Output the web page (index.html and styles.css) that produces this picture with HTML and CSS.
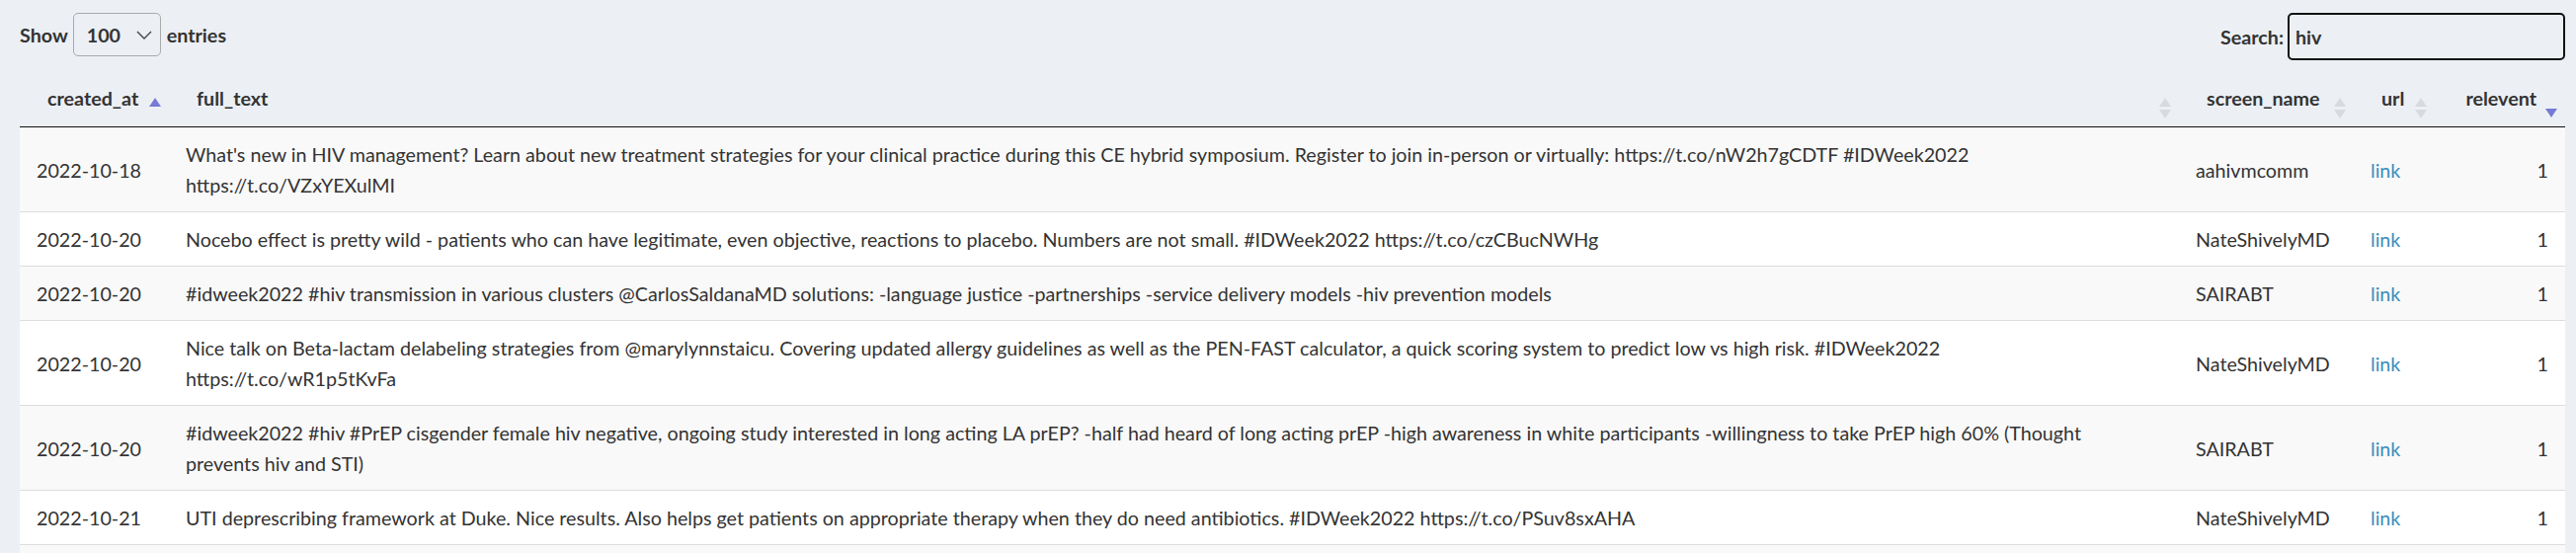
FILE: index.html
```html
<!DOCTYPE html>
<html lang="en">
<head>
  <meta charset="UTF-8" />
  <meta name="viewport" content="width=device-width, initial-scale=1.0"/>
  <title>IDWeek tweets</title>
  <link rel="stylesheet" href="styles.css">
</head>
<body>
  <div class="wrapper">
    <div class="toolbar">
      <label class="length">
        Show
        <span class="select-wrap">
          <select>
            <option>10</option>
            <option>25</option>
            <option>50</option>
            <option selected>100</option>
          </select>
          <svg class="chevron" width="16" height="9" viewBox="0 0 16 9"><path d="M1 1 L8 8 L15 1" fill="none" stroke="#444" stroke-width="1.4"/></svg>
        </span>
        entries
      </label>
      <label class="search">
        Search:
        <input type="search" value="hiv">
      </label>
    </div>

    <table class="data">
      <colgroup>
        <col class="c-date">
        <col class="c-text">
        <col class="c-name">
        <col class="c-url">
        <col class="c-rel">
      </colgroup>
      <thead>
        <tr>
          <th class="sort asc">created_at</th>
          <th class="sort">full_text</th>
          <th class="sort">screen_name</th>
          <th class="sort">url</th>
          <th class="sort desc num">relevent</th>
        </tr>
      </thead>
      <tbody>
        <tr>
          <td>2022-10-18</td>
          <td class="text">What's new in HIV management? Learn about new treatment strategies for your clinical practice during this CE hybrid symposium. Register to join in-person or virtually: https://t.co/nW2h7gCDTF #IDWeek2022<br>https://t.co/VZxYEXulMI</td>
          <td>aahivmcomm</td>
          <td><a href="#">link</a></td>
          <td class="num">1</td>
        </tr>
        <tr>
          <td>2022-10-20</td>
          <td class="text">Nocebo effect is pretty wild - patients who can have legitimate, even objective, reactions to placebo. Numbers are not small. #IDWeek2022 https://t.co/czCBucNWHg</td>
          <td>NateShivelyMD</td>
          <td><a href="#">link</a></td>
          <td class="num">1</td>
        </tr>
        <tr>
          <td>2022-10-20</td>
          <td class="text">#idweek2022 #hiv transmission in various clusters @CarlosSaldanaMD solutions: -language justice -partnerships -service delivery models -hiv prevention models</td>
          <td>SAIRABT</td>
          <td><a href="#">link</a></td>
          <td class="num">1</td>
        </tr>
        <tr>
          <td>2022-10-20</td>
          <td class="text">Nice talk on Beta-lactam delabeling strategies from @marylynnstaicu. Covering updated allergy guidelines as well as the PEN-FAST calculator, a quick scoring system to predict low vs high risk. #IDWeek2022<br>https://t.co/wR1p5tKvFa</td>
          <td>NateShivelyMD</td>
          <td><a href="#">link</a></td>
          <td class="num">1</td>
        </tr>
        <tr>
          <td>2022-10-20</td>
          <td class="text">#idweek2022 #hiv #PrEP cisgender female hiv negative, ongoing study interested in long acting LA prEP? -half had heard of long acting prEP -high awareness in white participants -willingness to take PrEP high 60% (Thought<br>prevents hiv and STI)</td>
          <td>SAIRABT</td>
          <td><a href="#">link</a></td>
          <td class="num">1</td>
        </tr>
        <tr>
          <td>2022-10-21</td>
          <td class="text">UTI deprescribing framework at Duke. Nice results. Also helps get patients on appropriate therapy when they do need antibiotics. #IDWeek2022 https://t.co/PSuv8sxAHA</td>
          <td>NateShivelyMD</td>
          <td><a href="#">link</a></td>
          <td class="num">1</td>
        </tr>
        <tr>
          <td>&nbsp;</td>
          <td class="text">&nbsp;</td>
          <td>&nbsp;</td>
          <td>&nbsp;</td>
          <td class="num">&nbsp;</td>
        </tr>
      </tbody>
    </table>
  </div>
</body>
</html>
```

FILE: styles.css
```css
* {
  box-sizing: border-box;
}

body {
  margin: 0;
  padding: 0;
  font-family: Lato, "Liberation Sans", sans-serif;
  font-size: 19.7px;
  background-color: #ecf0f5;
  color: #333333;
  overflow: hidden;
}

.wrapper {
  padding: 0 11px 0 20px;
}

.toolbar {
  display: flex;
  justify-content: space-between;
  align-items: flex-start;
  padding-top: 13px;
  margin-bottom: 9px;
}

label {
  font-weight: 700;
  display: flex;
  align-items: center;
}

.length {
  height: 44px;
  gap: 5px;
}

.select-wrap {
  position: relative;
  display: inline-block;
  margin-right: 1px;
}

select {
  appearance: none;
  -webkit-appearance: none;
  width: 89px;
  height: 44px;
  padding: 0 0 0 13px;
  border: 1px solid #aaaaaa;
  border-radius: 5px;
  background: transparent;
  font-family: inherit;
  font-size: 19.7px;
  font-weight: 700;
  color: #333333;
}

.chevron {
  position: absolute;
  right: 9px;
  top: 18px;
  pointer-events: none;
}

.search {
  height: 48px;
  gap: 4px;
}

.search input {
  width: 281px;
  height: 48px;
  padding: 0 6px;
  border: 2px solid #111111;
  border-radius: 5px;
  background: transparent;
  font-family: inherit;
  font-size: 19.7px;
  font-weight: 700;
  color: #333333;
  outline: none;
  text-decoration: underline wavy #d33;
  text-underline-offset: 4px;
  text-decoration-thickness: 1px;
}

table.data {
  width: 100%;
  table-layout: fixed;
  border-collapse: collapse;
}

.c-date { width: 151px; }
.c-name { width: 177px; }
.c-url { width: 82px; }
.c-rel { width: 132px; }

th {
  position: relative;
  text-align: left;
  font-weight: 700;
  line-height: 31px;
  padding: 14px 28px 13px 28px;
  border-bottom: 1px solid #111111;
  white-space: nowrap;
}

th.num {
  text-align: right;
  padding-right: 29px;
}

/* sort arrows */
th.sort::before,
th.sort::after {
  content: "";
  position: absolute;
  right: 8px;
  width: 0;
  height: 0;
  border-left: 6px solid transparent;
  border-right: 6px solid transparent;
}

th.sort::before {
  top: 29px;
  border-bottom: 9px solid #d8dadf;
}

th.sort::after {
  top: 41px;
  border-top: 9px solid #d8dadf;
}

th.asc::before {
  border-bottom-color: #767bd6;
}

th.asc::after,
th.desc::before {
  display: none;
}

th.desc::after {
  top: 40px;
  border-top-color: #767bd6;
}

td {
  line-height: 31px;
  padding: 12px 17px 11px 17px;
  border-top: 1px solid #dddddd;
  vertical-align: middle;
  white-space: nowrap;
  overflow: hidden;
}

tbody tr {
  background: #ffffff;
}

tbody tr:nth-child(odd) {
  background: #f9f9f9;
}

tbody tr:first-child td {
  border-top: none;
}

td.num {
  text-align: right;
}

a {
  color: #3c8dbc;
  text-decoration: none;
}
```
